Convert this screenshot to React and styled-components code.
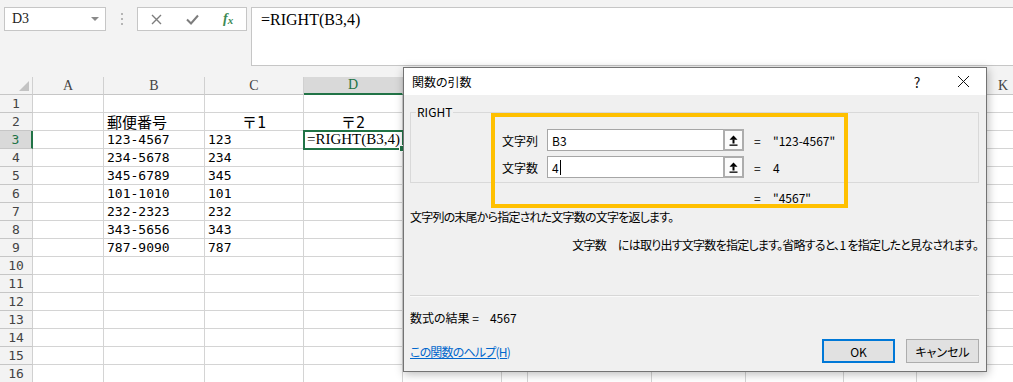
import React from "react";
import styled, { createGlobalStyle, css } from "styled-components";

const UI_FONT = `"Noto Sans CJK JP", "Noto Sans", sans-serif`;
const SERIF = `"Liberation Serif", "Noto Sans CJK JP", serif`;
const GOTHIC = `"DejaVu Sans Mono", "Noto Sans CJK JP", monospace`;
const GREEN = "#217346";

// columns E..J sit under the dialog, so their letters are never seen
const COLUMNS = [
  { id: "A", w: 71 },
  { id: "B", w: 101 },
  { id: "C", w: 99 },
  { id: "D", w: 99 },
  { id: "E", w: 99, covered: true },
  { id: "F", w: 26, covered: true },
  { id: "G", w: 124, covered: true },
  { id: "H", w: 94, covered: true },
  { id: "I", w: 98, covered: true },
  { id: "J", w: 73, covered: true },
  { id: "K", w: 173 },
];

const POSTAL = ["123-4567", "234-5678", "345-6789", "101-1010", "232-2323", "343-5656", "787-9090"];

const CELLS = {
  2: { B: "郵便番号", C: "〒1", D: "〒2" },
};
POSTAL.forEach((code, i) => {
  CELLS[i + 3] = { B: code, C: code.slice(0, 3) };
});
CELLS[3].D = "=RIGHT(B3,4)";

const ACTIVE = { row: 3, col: "D" };

function App() {
  return (
    <>
      <GlobalStyle />
      <Page>
        <FormulaBar>
          <NameBox>
            D3
            <DropArrow />
          </NameBox>
          <Grip>
            <i />
            <i />
            <i />
          </Grip>
          <IconBox>
            <IconSlot>
              <svg width="11" height="11" viewBox="0 0 11 11">
                <path d="M1 1 L10 10 M10 1 L1 10" stroke="#7d7d7d" strokeWidth="1.4" fill="none" />
              </svg>
            </IconSlot>
            <IconSlot>
              <svg width="13" height="11" viewBox="0 0 13 11">
                <path d="M1 5.5 L5 9.5 L12 1.5" stroke="#7d7d7d" strokeWidth="2" fill="none" />
              </svg>
            </IconSlot>
            <IconSlot>
              <Fx>
                f<sub>x</sub>
              </Fx>
            </IconSlot>
          </IconBox>
          <FormulaInput>=RIGHT(B3,4)</FormulaInput>
        </FormulaBar>

        <Sheet>
          <Corner>
            <CornerMark />
          </Corner>
          {COLUMNS.map((c) => (
            <ColHeader key={c.id} $selected={c.id === ACTIVE.col}>
              {!c.covered && c.id}
            </ColHeader>
          ))}
          {Array.from({ length: 16 }, (_, i) => i + 1).map((row) => (
            <React.Fragment key={row}>
              <RowHeader $selected={row === ACTIVE.row}>{row}</RowHeader>
              {COLUMNS.map((c) => {
                const value = CELLS[row] && CELLS[row][c.id];
                const kind = !value ? "text" : value.startsWith("=") ? "formula" : /[^\x00-\x7f]/.test(value) ? "jp" : "text";
                return (
                  <Cell
                    key={c.id}
                    $kind={kind}
                    $center={row === 2 && (c.id === "C" || c.id === "D")}
                    $active={row === ACTIVE.row && c.id === ACTIVE.col}
                  >
                    {value}
                  </Cell>
                );
              })}
            </React.Fragment>
          ))}
        </Sheet>

        <Dialog>
          <TitleBar>
            <TitleText>関数の引数</TitleText>
            <TitleButton>?</TitleButton>
            <TitleButton>
              <svg width="13" height="13" viewBox="0 0 13 13">
                <path d="M1 1 L12 12 M12 1 L1 12" stroke="#111" strokeWidth="1" fill="none" />
              </svg>
            </TitleButton>
          </TitleBar>

          <DialogBody>
            <GroupBox>
              <legend>RIGHT</legend>
              <ArgList>
                <ArgRow>
                  <ArgLabel>文字列</ArgLabel>
                  <ArgInput>B3</ArgInput>
                  <RefButton>
                    <RefIcon />
                  </RefButton>
                  <Eq>=</Eq>
                  <span>"123-4567"</span>
                </ArgRow>
                <ArgRow>
                  <ArgLabel>文字数</ArgLabel>
                  <ArgInput>
                    4<Caret />
                  </ArgInput>
                  <RefButton>
                    <RefIcon />
                  </RefButton>
                  <Eq>=</Eq>
                  <span>4</span>
                </ArgRow>
              </ArgList>
            </GroupBox>

            <ResultRow>
              <Eq>=</Eq>
              <span>"4567"</span>
            </ResultRow>

            <Description>文字列の末尾から指定された文字数の文字を返します。</Description>
            <ArgHelp>
              <ArgName>文字数</ArgName>
              には取り出す文字数を指定します。省略すると、1 を指定したと見なされます。
            </ArgHelp>

            <Separator />

            <FormulaResult>
              数式の結果 =<ResultValue>4567</ResultValue>
            </FormulaResult>

            <Footer>
              <HelpLink>この関数のヘルプ(H)</HelpLink>
              <Buttons>
                <DialogButton $primary>OK</DialogButton>
                <DialogButton>キャンセル</DialogButton>
              </Buttons>
            </Footer>
          </DialogBody>

          <Highlight />
        </Dialog>
      </Page>
    </>
  );
}

function RefIcon() {
  return (
    <svg width="9" height="11" viewBox="0 0 9 11">
      <path d="M4.5 0.5 L8.5 4.8 H0.5 Z" fill="#000" />
      <rect x="3.5" y="4.5" width="2" height="4" fill="#000" />
      <rect x="0.5" y="9.5" width="8" height="1.3" fill="#000" />
    </svg>
  );
}

const GlobalStyle = createGlobalStyle`
  html, body {
    margin: 0;
    padding: 0;
  }
  body {
    background: #f3f3f3;
    overflow: hidden;
  }
`;

const Page = styled.div`
  position: relative;
  width: 1013px;
  height: 382px;
  overflow: hidden;
  background: #f3f3f3;
  font-family: ${UI_FONT};
`;

/* ---------- formula bar ---------- */

const FormulaBar = styled.div`
  display: flex;
  align-items: flex-start;
  height: 77px;
  box-sizing: border-box;
  padding: 7px 0 0 4px;
`;

const NameBox = styled.div`
  width: 102px;
  height: 24px;
  box-sizing: border-box;
  display: flex;
  align-items: center;
  justify-content: space-between;
  padding: 0 6px 0 7px;
  background: #fff;
  border: 1px solid #c6c6c6;
  font: 14px ${SERIF};
  color: #222;
`;

const DropArrow = styled.span`
  width: 0;
  height: 0;
  border-left: 4px solid transparent;
  border-right: 4px solid transparent;
  border-top: 4px solid #8a8a8a;
`;

const Grip = styled.div`
  display: flex;
  flex-direction: column;
  gap: 3px;
  margin: 6px 0 0 15px;

  i {
    display: block;
    width: 2px;
    height: 2px;
    background: #b5b5b5;
  }
`;

const IconBox = styled.div`
  display: flex;
  margin-left: 14px;
  width: 110px;
  height: 24px;
  box-sizing: border-box;
  padding-left: 1px;
  background: #fff;
  border: 1px solid #c6c6c6;
`;

const IconSlot = styled.div`
  width: 36px;
  display: flex;
  align-items: center;
  justify-content: center;
`;

const Fx = styled.span`
  font: italic bold 14px ${SERIF};
  color: #3c8a54;
  line-height: 1;

  sub {
    font-size: 11px;
    vertical-align: -1px;
  }
`;

const FormulaInput = styled.div`
  flex: 1;
  margin-left: 4px;
  height: 59px;
  box-sizing: border-box;
  padding: 2px 9px;
  background: #fff;
  border: 1px solid #c6c6c6;
  border-right: none;
  font: 16px/20px ${SERIF};
  color: #000;
`;

/* ---------- sheet ---------- */

const Sheet = styled.div`
  display: grid;
  grid-template-columns: 33px ${COLUMNS.map((c) => `${c.w}px`).join(" ")};
  grid-auto-rows: 18px;
  width: max-content;
`;

const headerBase = css`
  box-sizing: border-box;
  display: flex;
  align-items: center;
  justify-content: center;
  background: #f3f3f3;
  border-right: 1px solid #d0d0d0;
  border-bottom: 1px solid #c6c6c6;
  color: #444;
`;

const Corner = styled.div`
  ${headerBase};
  align-items: flex-end;
  justify-content: flex-end;
  padding: 0 3px 3px 0;
`;

const CornerMark = styled.div`
  width: 0;
  height: 0;
  border-left: 10px solid transparent;
  border-bottom: 10px solid #c3c3c3;
`;

const ColHeader = styled.div`
  ${headerBase};
  font: 14px ${SERIF};
  ${(p) =>
    p.$selected &&
    css`
      background: #d9d9d9;
      color: ${GREEN};
      border-bottom: 2px solid ${GREEN};
    `}
`;

const RowHeader = styled.div`
  ${headerBase};
  font: 13px ${GOTHIC};
  ${(p) =>
    p.$selected &&
    css`
      background: #d9d9d9;
      color: ${GREEN};
      border-right: 2px solid ${GREEN};
    `}
`;

const Cell = styled.div`
  position: relative;
  box-sizing: border-box;
  display: flex;
  align-items: center;
  justify-content: ${(p) => (p.$center ? "center" : "flex-start")};
  padding: 0 3px;
  background: #fff;
  border-right: 1px solid #d4d4d4;
  border-bottom: 1px solid #d4d4d4;
  white-space: nowrap;
  color: #000;
  font-family: ${GOTHIC};
  font-size: 13px;
  ${(p) => p.$kind === "jp" && css`font-size: 15px;`}
  ${(p) => p.$kind === "formula" && css`font: 15px ${SERIF};`}
  ${(p) =>
    p.$active &&
    css`
      z-index: 1;
      outline: 2px solid ${GREEN};
      outline-offset: -1px;

      &::after {
        content: "";
        position: absolute;
        right: -4px;
        bottom: -4px;
        width: 5px;
        height: 5px;
        background: ${GREEN};
        border: 1px solid #fff;
      }
    `}
`;

/* ---------- dialog ---------- */

const Dialog = styled.div`
  position: absolute;
  left: 403px;
  top: 67px;
  z-index: 5;
  width: 584px;
  box-sizing: border-box;
  background: #f0f0f0;
  border: 1px solid #737373;
  box-shadow: 1px 2px 9px rgba(0, 0, 0, 0.28);
  font: 12px ${UI_FONT};
  font-feature-settings: "palt";
  color: #000;
`;

const TitleBar = styled.div`
  display: flex;
  align-items: center;
  height: 27px;
  padding-left: 8px;
  background: #fff;
`;

const TitleText = styled.div`
  flex: 1;
  font-size: 12px;
`;

const TitleButton = styled.div`
  width: 46px;
  height: 27px;
  display: flex;
  align-items: center;
  justify-content: center;
  font: 14px ${UI_FONT};
  color: #111;
`;

const DialogBody = styled.div`
  display: flex;
  flex-direction: column;
  padding: 0 7px 8px 6px;
`;

const GroupBox = styled.fieldset`
  margin: 9px 0 0;
  padding: 0;
  border: 1px solid #d9d9d9;
  min-width: 0;

  legend {
    margin-left: 5px;
    padding: 0 1px;
    font-size: 12px;
    line-height: 16px;
    font-feature-settings: normal;
  }
`;

const ArgList = styled.div`
  display: flex;
  flex-direction: column;
  gap: 5px;
  padding: 9px 0 4px 91px;
`;

const ArgRow = styled.div`
  display: grid;
  grid-template-columns: 45px 176px 21px 29px auto;
  align-items: center;
  height: 22px;
`;

const ArgLabel = styled.span`
  font-size: 12px;
`;

const ArgInput = styled.div`
  height: 22px;
  box-sizing: border-box;
  display: flex;
  align-items: center;
  padding-left: 4px;
  background: #fff;
  border: 1px solid #a6a6a6;
  border-right: none;
`;

const Caret = styled.span`
  display: inline-block;
  width: 1px;
  height: 15px;
  margin-left: 1px;
  background: #000;
`;

const RefButton = styled.div`
  height: 22px;
  box-sizing: border-box;
  display: flex;
  align-items: center;
  justify-content: center;
  background: #fbfbfb;
  border: 2px solid #adadad;
`;

const Eq = styled.span`
  width: 29px;
  box-sizing: border-box;
  padding-left: 10px;
`;

const ResultRow = styled.div`
  display: flex;
  align-items: center;
  height: 18px;
  margin-top: 5px;
  padding-left: 334px;
`;

const Description = styled.div`
  margin-top: 2px;
  line-height: 17px;
  letter-spacing: -0.8px;
`;

const ArgHelp = styled.div`
  margin-top: 11px;
  line-height: 17px;
  text-align: right;
  padding-right: 1px;
  letter-spacing: -0.75px;
`;

const ArgName = styled.span`
  margin-right: 12px;
`;

const Separator = styled.div`
  margin-top: 42px;
  height: 1px;
  background: #d7d7d7;
  box-shadow: 0 1px 0 #fafafa;
`;

const FormulaResult = styled.div`
  margin-top: 13px;
  line-height: 17px;
`;

const ResultValue = styled.span`
  margin-left: 11px;
`;

const Footer = styled.div`
  display: flex;
  align-items: center;
  justify-content: space-between;
  margin-top: 13px;
`;

const HelpLink = styled.a`
  color: #0066cc;
  text-decoration: underline;
  letter-spacing: -0.8px;
  cursor: pointer;
`;

const Buttons = styled.div`
  display: flex;
  gap: 11px;
`;

const DialogButton = styled.div`
  width: 73px;
  height: 24px;
  box-sizing: border-box;
  display: flex;
  align-items: center;
  justify-content: center;
  background: #e1e1e1;
  border: ${(p) => (p.$primary ? "2px solid #0078d7" : "1px solid #adadad")};
  font-size: 12px;
`;

const Highlight = styled.div`
  position: absolute;
  left: 87px;
  top: 45px;
  width: 357px;
  height: 95px;
  box-sizing: border-box;
  border: 4px solid #ffc000;
  pointer-events: none;
`;

export default App;
